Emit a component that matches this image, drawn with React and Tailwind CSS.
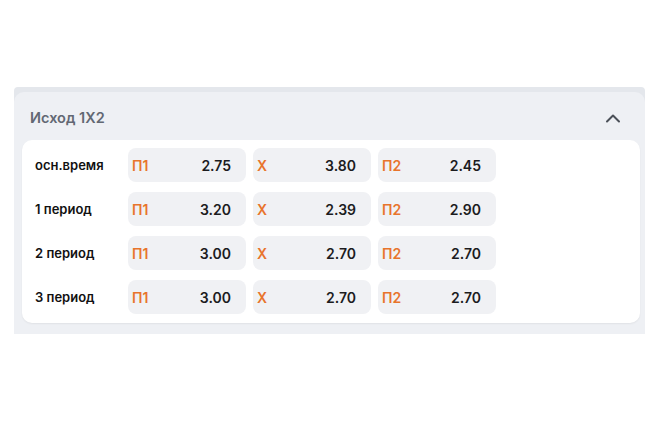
import React from "react";

const rows = [
  { label: "осн.время", odds: ["2.75", "3.80", "2.45"] },
  { label: "1 период", odds: ["3.20", "2.39", "2.90"] },
  { label: "2 период", odds: ["3.00", "2.70", "2.70"] },
  { label: "3 период", odds: ["3.00", "2.70", "2.70"] },
];

const outcomes = ["П1", "X", "П2"];

function OddCell({ name, value }) {
  return (
    <div className="w-[118px] h-[34px] rounded-[8px] bg-[#f0f1f4] flex items-center justify-between pl-[4px] pr-[15px]">
      <span className="text-[14px] font-semibold text-[#e8742c]">{name}</span>
      <span className="text-[14px] font-semibold text-[#1c1c1e]">{value}</span>
    </div>
  );
}

export default function App() {
  return (
    <div
      className="w-[656px] h-[434px] bg-white pt-[87px] px-[14px]"
      style={{ fontFamily: "Inter, 'Noto Sans', sans-serif" }}
    >
      <div className="w-[631px] bg-[#e4e7ec] pt-[5px] rounded-t-[4px]">
        <div className="bg-[#eef0f4] rounded-t-[10px] pb-[11px]">
          <div className="h-[48px] flex items-center justify-between pt-[4px] pl-[16px] pr-[24px]">
            <span className="text-[14.5px] font-semibold text-[#626873]">Исход 1X2</span>
            <svg width="16" height="10" viewBox="0 0 16 10" fill="none">
              <path d="M2 8.5L8 2.5L14 8.5" stroke="#4b5058" strokeWidth="2" strokeLinecap="round" strokeLinejoin="round" />
            </svg>
          </div>
          <div className="mx-[8px] mr-[5px] bg-white rounded-[10px] pt-[8px] pb-[9px] flex flex-col gap-[10px] shadow-[0_1px_2px_rgba(0,0,0,0.06)]">
            {rows.map((r) => (
              <div key={r.label} className="flex items-center">
                <div className="w-[106px] pl-[13px] pt-[1px] text-[13px] font-semibold text-[#111]">{r.label}</div>
                <div className="flex gap-[7px]">
                  {outcomes.map((o, i) => (
                    <OddCell key={o} name={o} value={r.odds[i]} />
                  ))}
                </div>
              </div>
            ))}
          </div>
        </div>
      </div>
    </div>
  );
}
